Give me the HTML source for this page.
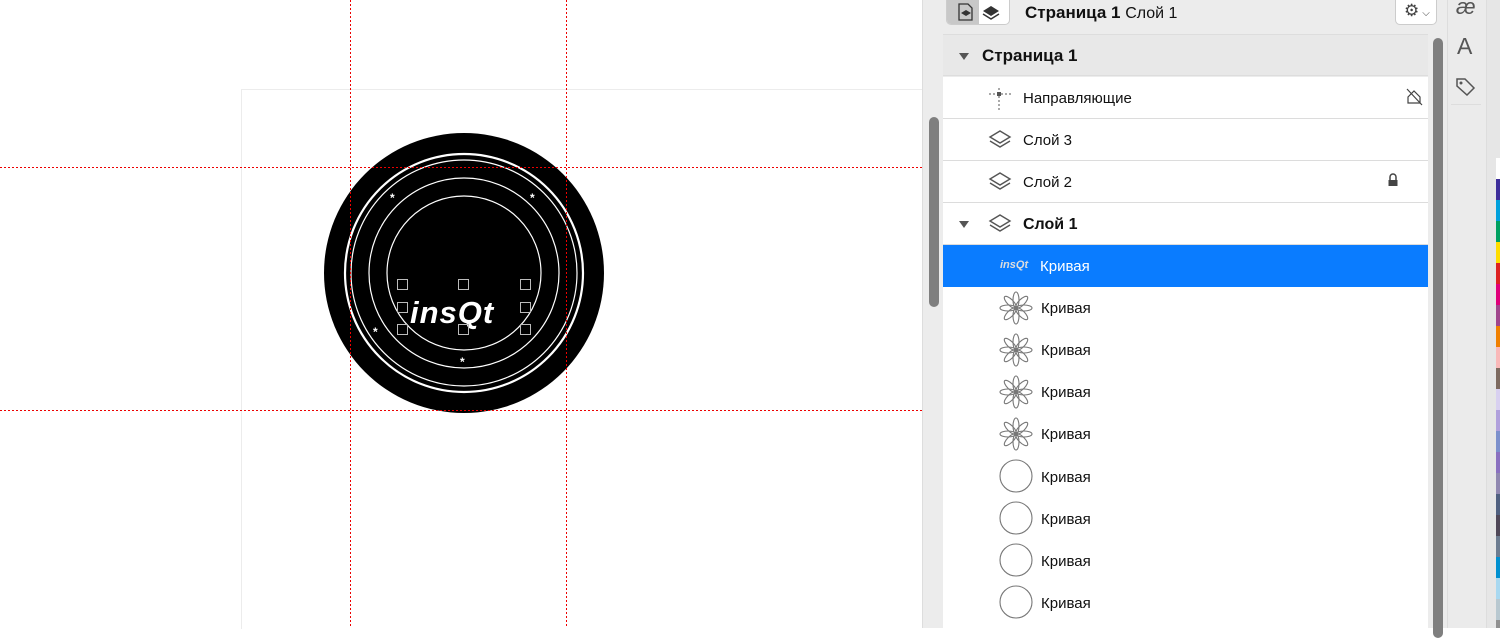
<!DOCTYPE html>
<html><head><meta charset="utf-8"><style>
*{margin:0;padding:0;box-sizing:border-box}
body{width:1500px;height:628px;overflow:hidden;background:#fff;font-family:"Liberation Sans",sans-serif;position:relative}
.abs{position:absolute}
.row{position:absolute;left:943px;width:485px;height:42px;background:#fff;border-bottom:1px solid #dcdcdc;font-size:15px;color:#111}
.row .t{position:absolute;left:80px;top:13px}
.row .ic{position:absolute;left:56px;top:9px}
.sel{background:#0a7cff;color:#fff;border-bottom:none}
</style></head><body>
<div class="abs" style="left:241px;top:89px;width:682px;height:540px;border-left:1px solid #ececec;border-top:1px solid #ececec"></div>
<svg class="abs" style="left:0;top:0" width="922" height="628">
<circle cx="464" cy="273" r="140" fill="#000"/>
<circle cx="464" cy="273" r="119" fill="none" stroke="#fff" stroke-width="2.2"/>
<circle cx="464" cy="273" r="113" fill="none" stroke="#fff" stroke-width="1.2"/>
<circle cx="464" cy="273" r="95" fill="none" stroke="#fff" stroke-width="1.2"/>
<circle cx="464" cy="273" r="77" fill="none" stroke="#fff" stroke-width="1.2"/>
<g fill="#fff" font-size="12" font-weight="bold" font-family="Liberation Sans"><text x="390" y="202">*</text><text x="530" y="202">*</text><text x="373" y="336">*</text><text x="460" y="366">*</text></g>
<text x="410" y="323" fill="#fff" font-size="31" font-weight="bold" font-style="italic" font-family="Liberation Sans" letter-spacing="1">insQt</text>
<g fill="none" stroke="#bbb" stroke-width="1">
<rect x="397.5" y="279.5" width="10" height="10"/><rect x="458.5" y="279.5" width="10" height="10"/><rect x="520.5" y="279.5" width="10" height="10"/>
<rect x="397.5" y="302.5" width="10" height="10"/><rect x="520.5" y="302.5" width="10" height="10"/>
<rect x="397.5" y="324.5" width="10" height="10"/><rect x="458.5" y="324.5" width="10" height="10"/><rect x="520.5" y="324.5" width="10" height="10"/>
</g>
<g stroke="#e00" stroke-width="1" stroke-dasharray="2,2">
<line x1="0" y1="167.5" x2="922" y2="167.5"/><line x1="0" y1="410.5" x2="922" y2="410.5"/>
<line x1="350.5" y1="0" x2="350.5" y2="628"/><line x1="566.5" y1="0" x2="566.5" y2="628"/>
</g>
</svg>
<div class="abs" style="left:922px;top:0;width:525px;height:628px;background:#ececec;border-left:1px solid #ddd"></div>
<div class="abs" style="left:929px;top:117px;width:10px;height:190px;background:#7f7f7f;border-radius:5px"></div>
<div class="abs" style="left:1433px;top:38px;width:10px;height:600px;background:#7f7f7f;border-radius:5px"></div>
<div class="abs" style="left:946px;top:0;width:64px;height:25px;border:1px solid #ccc;border-top:none;border-radius:0 0 5px 5px;background:#fff;overflow:hidden">
 <div style="width:32px;height:25px;background:#c8c8c8"></div>
</div>
<svg class="abs" style="left:955px;top:2px" width="50" height="20"><path d="M4 2h9l4 4v12H4z" fill="none" stroke="#333" stroke-width="1.3"/><path d="M6 11l5-3 5 3-5 3z" fill="#333"/><path d="M36 4l8 5-8 5-8-5z" fill="#333"/><path d="M28 12l8 5 8-5" fill="none" stroke="#333" stroke-width="1.5"/></svg>
<div class="abs" style="left:1025px;top:3px;font-size:17px;color:#111"><b>Страница 1</b> <span style="font-size:16px">Слой 1</span></div>
<div class="abs" style="left:1395px;top:0;width:42px;height:25px;background:#fff;border:1px solid #ccc;border-top:none;border-radius:0 0 5px 5px;font-size:17px;color:#444;padding-left:8px;line-height:22px">⚙<span style="font-size:10px;margin-left:3px">⌵</span></div>
<div class="abs" style="left:943px;top:34px;width:485px;height:1px;background:#ddd"></div>
<div class="abs" style="left:943px;top:35px;width:485px;height:41px;background:#e8e8e8;border-bottom:1px solid #ddd"></div>
<div class="abs" style="left:959px;top:53px;width:0;height:0;border-left:5px solid transparent;border-right:5px solid transparent;border-top:7px solid #555"></div>
<div class="abs" style="left:982px;top:46px;font-size:17px;font-weight:bold;color:#111">Страница 1</div>
<div class="row" style="top:77px"><svg class="ic" style="left:44px" width="26" height="26"><path d="M12 2v22M2 8h22" stroke="#555" stroke-dasharray="2,2"/><rect x="10" y="6" width="4" height="4" fill="#555"/></svg><span class="t">Направляющие</span><svg class="abs" style="left:462px;top:10px" width="18" height="20"><path d="M3 16h12v-6l-6-6-6 6z" fill="none" stroke="#444" stroke-width="1.2"/><path d="M2 2l15 16" stroke="#444" stroke-width="1.2"/></svg></div>
<div class="row" style="top:119px"><svg class="ic" style="left:44px" width="26" height="24"><path d="M13 3l10 6-10 6-10-6z" fill="#fff" stroke="#555" stroke-width="1.4"/><path d="M3 13l10 6 10-6" fill="none" stroke="#555" stroke-width="1.4"/></svg><span class="t">Слой 3</span></div>
<div class="row" style="top:161px"><svg class="ic" style="left:44px" width="26" height="24"><path d="M13 3l10 6-10 6-10-6z" fill="#fff" stroke="#555" stroke-width="1.4"/><path d="M3 13l10 6 10-6" fill="none" stroke="#555" stroke-width="1.4"/></svg><span class="t">Слой 2</span><svg class="abs" style="left:444px;top:12px" width="12" height="14"><path d="M3 7V4a3 3 0 0 1 6 0v3" fill="none" stroke="#444" stroke-width="1.5"/><rect x="1.5" y="7" width="9" height="6" fill="#444"/></svg></div>
<div class="row" style="top:203px"><div class="abs" style="left:16px;top:18px;border-left:5px solid transparent;border-right:5px solid transparent;border-top:7px solid #555"></div><svg class="ic" style="left:44px" width="26" height="24"><path d="M13 3l10 6-10 6-10-6z" fill="#fff" stroke="#555" stroke-width="1.4"/><path d="M3 13l10 6 10-6" fill="none" stroke="#555" stroke-width="1.4"/></svg><span class="t" style="font-weight:bold;font-size:16px">Слой 1</span></div>
<div class="row sel" style="top:245px"><span class="abs" style="left:57px;top:14px;font-size:11px;font-style:italic;font-weight:bold;color:#ddd">insQt</span><span class="t" style="left:97px">Кривая</span></div>
<div class="row" style="top:287px;border:none"><svg class="ic" style="left:56px;top:4px" width="34" height="34"><g fill="none" stroke="#777" stroke-width="1.1" transform="translate(17 17)"><ellipse cx="0" cy="-8" rx="3" ry="8"/><ellipse cx="0" cy="-8" rx="3" ry="8" transform="rotate(45)"/><ellipse cx="0" cy="-8" rx="3" ry="8" transform="rotate(90)"/><ellipse cx="0" cy="-8" rx="3" ry="8" transform="rotate(135)"/><ellipse cx="0" cy="-8" rx="3" ry="8" transform="rotate(180)"/><ellipse cx="0" cy="-8" rx="3" ry="8" transform="rotate(225)"/><ellipse cx="0" cy="-8" rx="3" ry="8" transform="rotate(270)"/><ellipse cx="0" cy="-8" rx="3" ry="8" transform="rotate(315)"/></g></svg><span class="t" style="left:98px">Кривая</span></div>
<div class="row" style="top:329px;border:none"><svg class="ic" style="left:56px;top:4px" width="34" height="34"><g fill="none" stroke="#777" stroke-width="1.1" transform="translate(17 17)"><ellipse cx="0" cy="-8" rx="3" ry="8"/><ellipse cx="0" cy="-8" rx="3" ry="8" transform="rotate(45)"/><ellipse cx="0" cy="-8" rx="3" ry="8" transform="rotate(90)"/><ellipse cx="0" cy="-8" rx="3" ry="8" transform="rotate(135)"/><ellipse cx="0" cy="-8" rx="3" ry="8" transform="rotate(180)"/><ellipse cx="0" cy="-8" rx="3" ry="8" transform="rotate(225)"/><ellipse cx="0" cy="-8" rx="3" ry="8" transform="rotate(270)"/><ellipse cx="0" cy="-8" rx="3" ry="8" transform="rotate(315)"/></g></svg><span class="t" style="left:98px">Кривая</span></div>
<div class="row" style="top:371px;border:none"><svg class="ic" style="left:56px;top:4px" width="34" height="34"><g fill="none" stroke="#777" stroke-width="1.1" transform="translate(17 17)"><ellipse cx="0" cy="-8" rx="3" ry="8"/><ellipse cx="0" cy="-8" rx="3" ry="8" transform="rotate(45)"/><ellipse cx="0" cy="-8" rx="3" ry="8" transform="rotate(90)"/><ellipse cx="0" cy="-8" rx="3" ry="8" transform="rotate(135)"/><ellipse cx="0" cy="-8" rx="3" ry="8" transform="rotate(180)"/><ellipse cx="0" cy="-8" rx="3" ry="8" transform="rotate(225)"/><ellipse cx="0" cy="-8" rx="3" ry="8" transform="rotate(270)"/><ellipse cx="0" cy="-8" rx="3" ry="8" transform="rotate(315)"/></g></svg><span class="t" style="left:98px">Кривая</span></div>
<div class="row" style="top:413px;border:none"><svg class="ic" style="left:56px;top:4px" width="34" height="34"><g fill="none" stroke="#777" stroke-width="1.1" transform="translate(17 17)"><ellipse cx="0" cy="-8" rx="3" ry="8"/><ellipse cx="0" cy="-8" rx="3" ry="8" transform="rotate(45)"/><ellipse cx="0" cy="-8" rx="3" ry="8" transform="rotate(90)"/><ellipse cx="0" cy="-8" rx="3" ry="8" transform="rotate(135)"/><ellipse cx="0" cy="-8" rx="3" ry="8" transform="rotate(180)"/><ellipse cx="0" cy="-8" rx="3" ry="8" transform="rotate(225)"/><ellipse cx="0" cy="-8" rx="3" ry="8" transform="rotate(270)"/><ellipse cx="0" cy="-8" rx="3" ry="8" transform="rotate(315)"/></g></svg><span class="t" style="left:98px">Кривая</span></div>
<div class="row" style="top:455px;border:none"><svg class="ic" style="left:56px;top:4px" width="34" height="34"><circle cx="17" cy="17" r="16" fill="none" stroke="#777" stroke-width="1.1"/></svg><span class="t" style="left:98px;top:14px">Кривая</span></div>
<div class="row" style="top:497px;border:none"><svg class="ic" style="left:56px;top:4px" width="34" height="34"><circle cx="17" cy="17" r="16" fill="none" stroke="#777" stroke-width="1.1"/></svg><span class="t" style="left:98px;top:14px">Кривая</span></div>
<div class="row" style="top:539px;border:none"><svg class="ic" style="left:56px;top:4px" width="34" height="34"><circle cx="17" cy="17" r="16" fill="none" stroke="#777" stroke-width="1.1"/></svg><span class="t" style="left:98px;top:14px">Кривая</span></div>
<div class="row" style="top:581px;border:none;height:47px"><svg class="ic" style="left:56px;top:4px" width="34" height="34"><circle cx="17" cy="17" r="16" fill="none" stroke="#777" stroke-width="1.1"/></svg><span class="t" style="left:98px;top:14px">Кривая</span></div>
<div class="abs" style="left:1447px;top:0;width:40px;height:628px;background:#ebebeb;border-left:1px solid #ddd;border-right:1px solid #ddd"></div>
<div class="abs" style="left:1456px;top:-6px;font-size:22px;color:#555;font-style:italic">æ</div>
<div class="abs" style="left:1457px;top:33px;font-size:23px;color:#555">A</div>
<svg class="abs" style="left:1455px;top:76px" width="22" height="20"><path d="M2 3h8l9 9-7 7-10-9z" fill="none" stroke="#555" stroke-width="1.5"/><circle cx="6" cy="7" r="1.5" fill="#555"/></svg>
<div class="abs" style="left:1451px;top:104px;width:30px;height:1px;background:#ddd"></div>
<div class="abs" style="left:1487px;top:0;width:13px;height:628px;background:#e6e6e6"></div>
<div class="abs" style="left:1496px;top:158px;width:4px;height:470px;background:linear-gradient(#fff 0 21px,#3d2e9a 21px 42px,#00a0dc 42px 63px,#00a060 63px 84px,#ffdd00 84px 105px,#dd2222 105px 126px,#e0007a 126px 147px,#a0468c 147px 168px,#f08000 168px 189px,#f9b8b8 189px 210px,#7d6a60 210px 231px,#d8d0f0 231px 252px,#b0a0dc 252px 273px,#7c90cc 273px 294px,#8a70c0 294px 315px,#9088b0 315px 336px,#506080 336px 357px,#504858 357px 378px,#6c7c90 378px 399px,#0090d0 399px 420px,#a8d8f0 420px 441px,#b8c8d0 441px 462px,#909090 462px)"></div>
</body></html>
